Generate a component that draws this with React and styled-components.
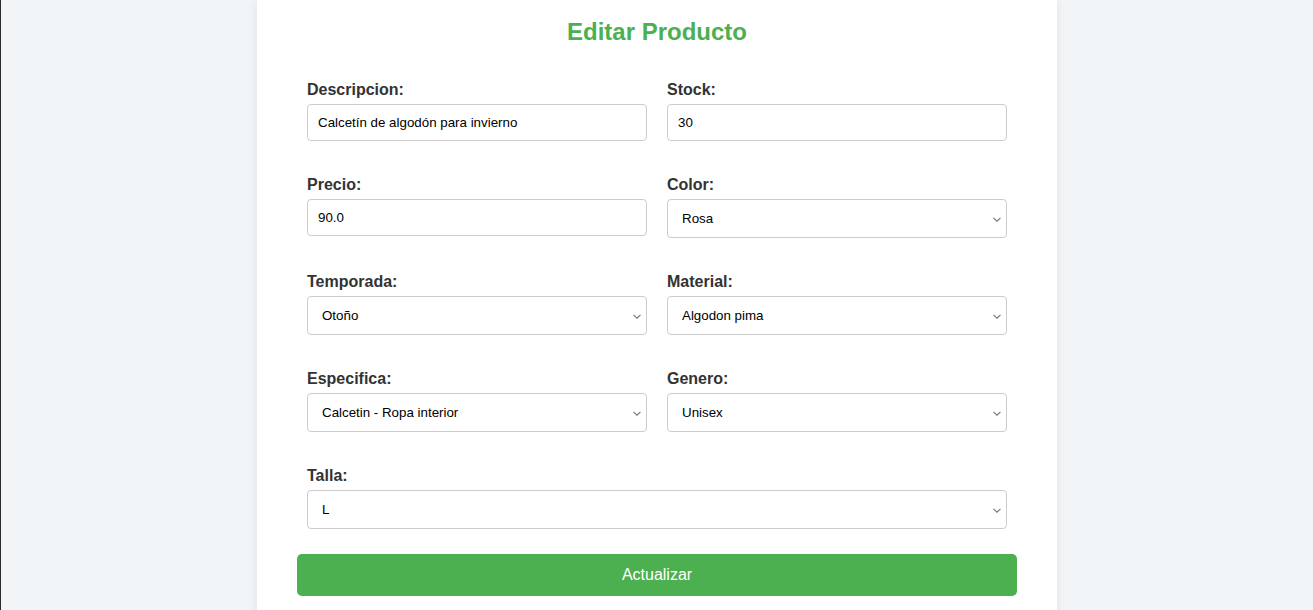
import React, { useState } from 'react';
import styled, { createGlobalStyle } from 'styled-components';

const GlobalStyle = createGlobalStyle`
  * { box-sizing: border-box; }
  body {
    margin: 0;
    background: #f2f5f7;
    font-family: "Liberation Sans", Arial, sans-serif;
    border-left: 1px solid #2a2a2a;
  }
`;

const FIELDS = [
  { name: 'descripcion', label: 'Descripcion:', type: 'text', value: 'Calcetín de algodón para invierno' },
  { name: 'stock', label: 'Stock:', type: 'text', value: '30' },
  { name: 'precio', label: 'Precio:', type: 'text', value: '90.0' },
  { name: 'color', label: 'Color:', type: 'select', value: 'Rosa', options: ['Rosa', 'Negro', 'Blanco', 'Azul', 'Gris'] },
  { name: 'temporada', label: 'Temporada:', type: 'select', value: 'Otoño', options: ['Primavera', 'Verano', 'Otoño', 'Invierno'] },
  { name: 'material', label: 'Material:', type: 'select', value: 'Algodon pima', options: ['Algodon pima', 'Poliester', 'Lana'] },
  { name: 'especifica', label: 'Especifica:', type: 'select', value: 'Calcetin - Ropa interior', options: ['Calcetin - Ropa interior', 'Polo - Ropa superior', 'Pantalon - Ropa inferior'] },
  { name: 'genero', label: 'Genero:', type: 'select', value: 'Unisex', options: ['Unisex', 'Hombre', 'Mujer'] },
  { name: 'talla', label: 'Talla:', type: 'select', value: 'L', options: ['S', 'M', 'L', 'XL'], full: true },
];

const App = () => {
  const [form, setForm] = useState(
    FIELDS.reduce((acc, f) => ({ ...acc, [f.name]: f.value }), {})
  );

  const handleChange = e => setForm({ ...form, [e.target.name]: e.target.value });

  return (
    <>
      <GlobalStyle />
      <Card>
        <Title>Editar Producto</Title>
        <Form onSubmit={e => e.preventDefault()}>
          <FieldGrid>
            {FIELDS.map(f => (
              <FormGroup key={f.name} full={f.full}>
                <Label htmlFor={f.name}>{f.label}</Label>
                {f.type === 'select' ? (
                  <SelectWrap>
                    <Select id={f.name} name={f.name} value={form[f.name]} onChange={handleChange}>
                      {f.options.map(o => (
                        <option key={o} value={o}>{o}</option>
                      ))}
                    </Select>
                    <Chevron viewBox="0 0 8 5" aria-hidden="true">
                      <path d="M0.5 0.8 L4 4.2 L7.5 0.8" />
                    </Chevron>
                  </SelectWrap>
                ) : (
                  <Input id={f.name} name={f.name} type="text" value={form[f.name]} onChange={handleChange} />
                )}
              </FormGroup>
            ))}
          </FieldGrid>
          <SubmitBtn type="submit">Actualizar</SubmitBtn>
        </Form>
      </Card>
    </>
  );
};

export default App;

const Card = styled.div`
  width: 800px;
  margin: 0 auto;
  background: #ffffff;
  padding: 18px 40px 40px;
  box-shadow: 0 0 10px rgba(0, 0, 0, 0.08);
`;

const Title = styled.h2`
  margin: 0 0 25px;
  text-align: center;
  color: #4caf50;
  font-size: 24px;
  font-weight: bold;
`;

const Form = styled.form`
  display: flex;
  flex-direction: column;
`;

const FieldGrid = styled.div`
  display: grid;
  grid-template-columns: 1fr 1fr;
  column-gap: 20px;
  row-gap: 35px;
  padding: 10px 10px 0;
`;

const FormGroup = styled.div`
  display: flex;
  flex-direction: column;
  grid-column: ${props => (props.full ? '1 / -1' : 'auto')};
`;

const Label = styled.label`
  font-size: 16px;
  font-weight: bold;
  color: #333;
  margin-bottom: 5px;
`;

const Input = styled.input`
  width: 100%;
  padding: 10px;
  border: 1px solid #ccc;
  border-radius: 4px;
  font-family: "Liberation Sans", Arial, sans-serif;
  font-size: 13.33px;
  color: #000;
  background: #fff;
  outline: none;
`;

const SelectWrap = styled.div`
  position: relative;
`;

const Select = styled.select`
  display: block;
  width: 100%;
  height: 39px;
  padding: 10px 24px 10px 14px;
  border: 1px solid #ccc;
  border-radius: 4px;
  font-family: "Liberation Sans", Arial, sans-serif;
  font-size: 13.33px;
  color: #000;
  background: #fff;
  outline: none;
  appearance: none;
  -webkit-appearance: none;
`;

const Chevron = styled.svg`
  position: absolute;
  right: 6px;
  top: 50%;
  width: 8px;
  height: 5px;
  margin-top: -2px;
  fill: none;
  stroke: #757575;
  stroke-width: 1.1;
  pointer-events: none;
`;

const SubmitBtn = styled.button`
  margin-top: 25px;
  width: 100%;
  padding: 12px;
  border: none;
  border-radius: 5px;
  background: #4caf50;
  color: #fff;
  font-family: "Liberation Sans", Arial, sans-serif;
  font-size: 16px;
  cursor: pointer;

  &:hover {
    background: #45a049;
  }
`;
